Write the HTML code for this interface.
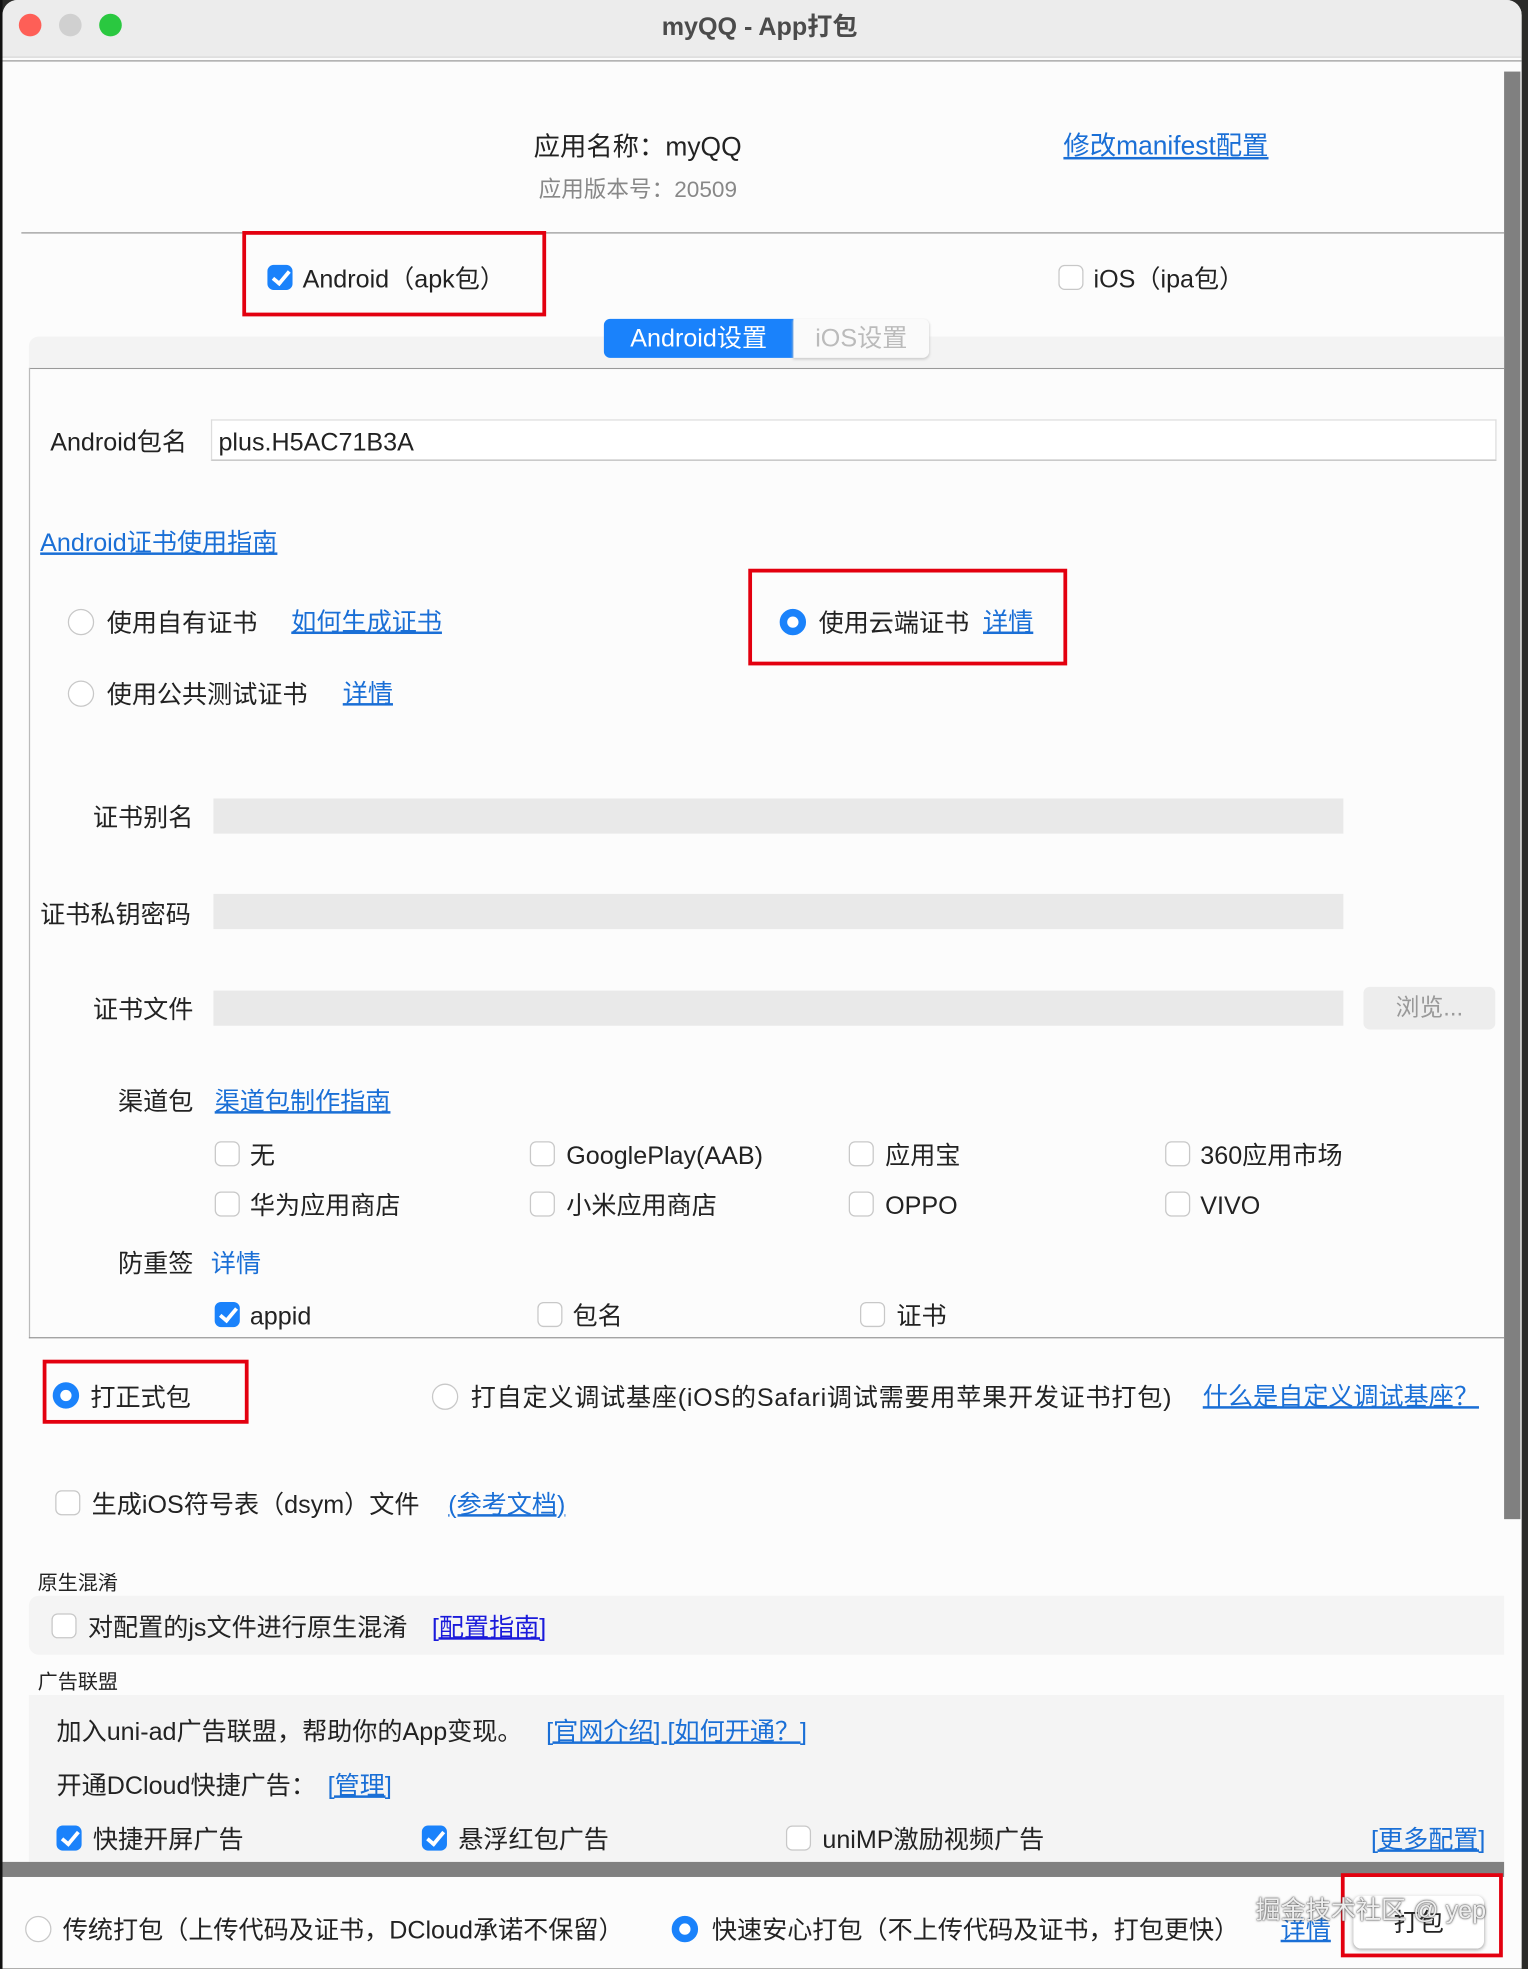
<!DOCTYPE html>
<html><head><meta charset="utf-8"><style>
html,body{margin:0;padding:0;width:1528px;height:1968px;overflow:hidden;background:#2b2b29;}
#w{position:absolute;left:0;top:0;width:1217px;height:1568px;transform:scale(1.2555);transform-origin:0 0;font-family:"Liberation Sans","Noto Sans CJK SC",sans-serif;color:#222;font-size:20px;}
.a{position:absolute;white-space:nowrap;line-height:1;margin-top:2px;}
.l{color:#1a6fd6;text-decoration:underline;}
.cb{position:absolute;width:20px;height:20px;border:1px solid #c8c8c8;border-radius:5px;background:#fff;box-sizing:border-box;}
.cb.on{background:#1a82fb;border-color:#1a82fb;}
.cb.on::after{content:"";position:absolute;left:6px;top:1px;width:5px;height:11px;border:solid #fff;border-width:0 3px 3px 0;transform:rotate(40deg);}
.rd{position:absolute;width:21px;height:21px;border:1px solid #c8c8c8;border-radius:50%;background:#fff;box-sizing:border-box;}
.rd.on{background:#fff;border:6px solid #1a82fb;}
.red{position:absolute;border:3px solid #e3000f;box-sizing:border-box;}
.inp{position:absolute;background:#e9e9e9;height:28px;}
</style></head><body><div id="w">
<div style="position:absolute;left:2px;top:0;width:1210px;height:1568px;background:#fcfcfc;border-radius:12px 12px 0 0;overflow:hidden;">
 <div style="position:absolute;left:0;top:0;width:1210px;height:45px;background:#ececec;border-bottom:1px solid #d8d8d8;"></div>
 <div style="position:absolute;left:0;top:48px;width:1210px;height:1px;background:#9a9a9a;"></div>
</div>
<div style="position:absolute;left:0;top:0;width:2px;height:1568px;background:#111;"></div>
<div style="position:absolute;left:15px;top:11px;width:18px;height:18px;border-radius:50%;background:#fe5f57;"></div>
<div style="position:absolute;left:47px;top:11px;width:18px;height:18px;border-radius:50%;background:#d0d0d0;"></div>
<div style="position:absolute;left:79px;top:11px;width:18px;height:18px;border-radius:50%;background:#2ac840;"></div>
<div class="a" style="left:0;width:1210px;text-align:center;top:10px;font-weight:bold;color:#4b4b4b;font-size:20px;">myQQ - App打包</div>
<div style="position:absolute;left:1198px;top:57px;width:13px;height:1153px;background:#808080;"></div>

<div class="a" style="left:425px;top:105px;font-size:21px;">应用名称：myQQ</div>
<div class="a" style="left:429px;top:140px;font-size:18px;color:#888;">应用版本号：20509</div>
<div class="a l" style="left:847px;top:104px;font-size:21px;">修改manifest配置</div>
<div style="position:absolute;left:17px;top:185px;width:1181px;height:1px;background:#999;"></div>

<div class="red" style="left:193px;top:184px;width:242px;height:68px;"></div>
<div class="cb on" style="left:213px;top:211px;"></div>
<div class="a" style="left:241px;top:211px;">Android（apk包）</div>
<div class="cb" style="left:843px;top:211px;"></div>
<div class="a" style="left:871px;top:211px;">iOS（ipa包）</div>

<div style="position:absolute;left:23px;top:268px;width:1175px;height:25px;background:#f3f3f3;border-radius:8px 0 0 0;border-bottom:1px solid #999;"></div>
<div style="position:absolute;left:23px;top:293px;width:1px;height:773px;background:#bbb;"></div>
<div style="position:absolute;left:23px;top:1065px;width:1175px;height:1px;background:#999;"></div>
<div style="position:absolute;left:481px;top:254px;width:151px;height:31px;background:#1a82fb;border-radius:5px 0 0 5px;color:#fff;text-align:center;line-height:33px;">Android设置</div>
<div style="position:absolute;left:632px;top:254px;width:108px;height:31px;background:#fafafa;border-radius:0 5px 5px 0;color:#bbb;text-align:center;line-height:33px;box-shadow:0 1px 2px #ccc;">iOS设置</div>

<div class="a" style="left:40px;top:341px;">Android包名</div>
<div style="position:absolute;left:168px;top:334px;width:1024px;height:33px;border:1px solid #ddd;border-bottom-color:#bbb;background:#fff;box-sizing:border-box;"></div>
<div class="a" style="left:174px;top:341px;">plus.H5AC71B3A</div>
<div class="a l" style="left:32px;top:421px;">Android证书使用指南</div>

<div class="rd" style="left:54px;top:485px;"></div>
<div class="a" style="left:85px;top:485px;">使用自有证书</div>
<div class="a l" style="left:232px;top:484px;">如何生成证书</div>
<div class="red" style="left:596px;top:453px;width:254px;height:77px;"></div>
<div class="rd on" style="left:621px;top:485px;"></div>
<div class="a" style="left:652px;top:485px;">使用云端证书</div>
<div class="a l" style="left:783px;top:484px;">详情</div>
<div class="rd" style="left:54px;top:542px;"></div>
<div class="a" style="left:85px;top:542px;">使用公共测试证书</div>
<div class="a l" style="left:273px;top:541px;">详情</div>

<div class="a" style="left:74px;top:640px;">证书别名</div>
<div class="inp" style="left:170px;top:636px;width:900px;"></div>
<div class="a" style="left:32px;top:717px;">证书私钥密码</div>
<div class="inp" style="left:170px;top:712px;width:900px;"></div>
<div class="a" style="left:74px;top:793px;">证书文件</div>
<div class="inp" style="left:170px;top:789px;width:900px;"></div>
<div style="position:absolute;left:1086px;top:786px;width:105px;height:34px;background:#ededed;border-radius:5px;color:#999;text-align:center;line-height:36px;font-size:19px;">浏览...</div>

<div class="a" style="left:94px;top:866px;">渠道包</div>
<div class="a l" style="left:171px;top:866px;">渠道包制作指南</div>
<div class="cb" style="left:171px;top:909px;"></div><div class="a" style="left:199px;top:909px;">无</div>
<div class="cb" style="left:422px;top:909px;"></div><div class="a" style="left:451px;top:909px;">GooglePlay(AAB)</div>
<div class="cb" style="left:676px;top:909px;"></div><div class="a" style="left:705px;top:909px;">应用宝</div>
<div class="cb" style="left:928px;top:909px;"></div><div class="a" style="left:956px;top:909px;">360应用市场</div>
<div class="cb" style="left:171px;top:949px;"></div><div class="a" style="left:199px;top:949px;">华为应用商店</div>
<div class="cb" style="left:422px;top:949px;"></div><div class="a" style="left:451px;top:949px;">小米应用商店</div>
<div class="cb" style="left:676px;top:949px;"></div><div class="a" style="left:705px;top:949px;">OPPO</div>
<div class="cb" style="left:928px;top:949px;"></div><div class="a" style="left:956px;top:949px;">VIVO</div>
<div class="a" style="left:94px;top:995px;">防重签</div>
<div class="a l" style="left:168px;top:995px;text-decoration:none;">详情</div>
<div class="cb on" style="left:171px;top:1037px;"></div><div class="a" style="left:199px;top:1037px;">appid</div>
<div class="cb" style="left:428px;top:1037px;"></div><div class="a" style="left:456px;top:1037px;">包名</div>
<div class="cb" style="left:685px;top:1037px;"></div><div class="a" style="left:714px;top:1037px;">证书</div>

<div class="red" style="left:34px;top:1083px;width:164px;height:51px;"></div>
<div class="rd on" style="left:42px;top:1101px;"></div>
<div class="a" style="left:72px;top:1102px;">打正式包</div>
<div class="rd" style="left:344px;top:1102px;"></div>
<div class="a" style="left:375px;top:1102px;letter-spacing:0.6px;">打自定义调试基座(iOS的Safari调试需要用苹果开发证书打包)</div>
<div class="a l" style="left:958px;top:1101px;">什么是自定义调试基座？</div>

<div class="cb" style="left:44px;top:1187px;"></div>
<div class="a" style="left:73px;top:1187px;">生成iOS符号表（dsym）文件</div>
<div class="a l" style="left:357px;top:1187px;">(参考文档)</div>

<div class="a" style="left:30px;top:1252px;font-size:16px;">原生混淆</div>
<div style="position:absolute;left:23px;top:1271px;width:1175px;height:47px;background:#f4f4f4;border-radius:8px 0 0 8px;"></div>
<div class="cb" style="left:41px;top:1285px;"></div>
<div class="a" style="left:70px;top:1285px;">对配置的js文件进行原生混淆</div>
<div class="a l" style="left:344px;top:1285px;color:#1a1adb;">[配置指南]</div>
<div class="a" style="left:30px;top:1331px;font-size:16px;">广告联盟</div>
<div style="position:absolute;left:23px;top:1350px;width:1175px;height:133px;background:#f4f4f4;"></div>
<div class="a" style="left:45px;top:1368px;">加入uni-ad广告联盟，帮助你的App变现。</div>
<div class="a l" style="left:435px;top:1368px;">[官网介绍] [如何开通？]</div>
<div class="a" style="left:45px;top:1411px;">开通DCloud快捷广告：</div>
<div class="a l" style="left:261px;top:1411px;">[管理]</div>
<div class="cb on" style="left:45px;top:1454px;"></div><div class="a" style="left:74px;top:1454px;">快捷开屏广告</div>
<div class="cb on" style="left:336px;top:1454px;"></div><div class="a" style="left:365px;top:1454px;">悬浮红包广告</div>
<div class="cb" style="left:626px;top:1454px;"></div><div class="a" style="left:655px;top:1454px;">uniMP激励视频广告</div>
<div class="a l" style="left:1092px;top:1454px;">[更多配置]</div>
<div style="position:absolute;left:2px;top:1483px;width:1196px;height:12px;background:#808080;"></div>

<div class="rd" style="left:20px;top:1526px;"></div>
<div class="a" style="left:50px;top:1526px;">传统打包（上传代码及证书，DCloud承诺不保留）</div>
<div class="rd on" style="left:535px;top:1526px;"></div>
<div class="a" style="left:567px;top:1526px;">快速安心打包（不上传代码及证书，打包更快）</div>
<div class="a l" style="left:1020px;top:1526px;">详情</div>
<div style="position:absolute;left:1078px;top:1510px;width:104px;height:42px;background:#fff;border-radius:6px;box-shadow:0 1px 3px #aaa;text-align:center;line-height:44px;">打包</div>
<div class="red" style="left:1068px;top:1492px;width:129px;height:67px;"></div>
<div class="a" style="left:1000px;top:1510px;color:rgba(255,255,255,0.9);text-shadow:0 0 2px #555,0 0 1px #333;">掘金技术社区 @ yep</div>
</div></body></html>
